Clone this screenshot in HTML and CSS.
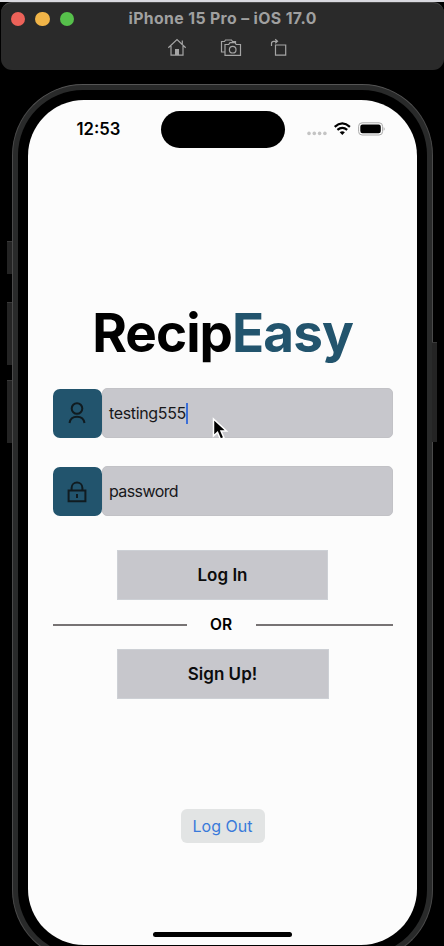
FILE: index.html
```html
<!DOCTYPE html>
<html lang="en">
<head>
<meta charset="utf-8">
<title>RecipEasy</title>
<link rel="stylesheet" href="styles.css">
</head>
<body>
<header class="toolbar">
  <div class="titlebar">
    <i class="light red"></i><i class="light yellow"></i><i class="light green"></i>
    <span class="window-title">iPhone 15 Pro – iOS 17.0</span>
  </div>
  <div class="tools">
    <svg width="20" height="20" viewBox="0 0 20 20"><path d="M1.3 9.700 10 1.600l8.700 8.100M4 8v9.200h12V8M15.300 6V2.600"/><path class="solid" d="M8 17v-6h4v6z"/></svg>
    <svg class="camera" width="22" height="20" viewBox="0 0 22 20"><path d="M4.500 14H1.500V3.500h3l1-1.500h6l1 1.500h3V5M5 6.500h3.700L10 4.600h5l1.200 1.900h4.300v10.800H5z"/><circle cx="12.700" cy="11.700" r="3.300"/></svg>
    <svg width="18" height="20" viewBox="0 0 18 20"><path d="M5.500 7h10.200v10.200H5.500zM1.500 8V5.500q0-2.200 2.200-2.200H7M5.200 1.300l2.300 2-2.300 2"/></svg>
  </div>
</header>
<div class="phone">
  <i class="key action"></i><i class="key volume-up"></i><i class="key volume-down"></i><i class="key power"></i>
  <div class="bezel">
    <main class="screen">
      <div class="status">
        <span class="time">12:53</span>
        <span class="island"></span>
        <span class="indicators">
          <svg width="78" height="16" viewBox="0 0 78 16">
            <g fill="#c4c4c4"><circle cx="2" cy="12.400" r="1.800"/><circle cx="7.300" cy="12.400" r="1.800"/><circle cx="12.600" cy="12.400" r="1.800"/><circle cx="17.900" cy="12.400" r="1.800"/></g>
            <g fill="none" stroke="#000" stroke-width="2.200"><path d="M27.700 5.800q7.600-6.700 15.200 0M30.400 8.900q4.900-4.200 9.800 0"/></g>
            <path d="M32.700 11.200q2.600-2.100 5.200 0l-2.600 2.700z"/>
            <rect x="51.600" y="1.800" width="24" height="12.200" rx="3.500" fill="none" stroke="#aaa"/>
            <rect x="53.300" y="3.500" width="20.500" height="8.800" rx="2.200"/><path d="M76.700 6q2 1.900 0 3.800z" fill="#aaa"/>
          </svg>
        </span>
      </div>
      <h1>Recip<span>Easy</span></h1>
      <div class="form">
        <div class="row">
          <span class="badge"><svg width="20" height="24" viewBox="0 0 20 24"><circle cx="10" cy="7.500" r="5.300"/><path d="M2.500 22c.7-4.200 3.600-6.200 7.500-6.200s6.800 2 7.500 6.200"/></svg></span>
          <span class="field"><span class="username">testing555</span><i class="caret"></i></span>
          <svg class="pointer" width="18" height="26" viewBox="0 0 18 26"><path d="M2.500 2v17l4-3.700 2.900 6.800 3.500-1.500-2.900-6.600h5.500z"/></svg>
        </div>
        <div class="row">
          <span class="badge"><svg class="lock" width="20" height="24" viewBox="0 0 20 24"><path d="M1.600 10.500h16.800v10.800H1.600zM4.600 10.500V8c0-7.200 10.800-7.200 10.800 0v2.500M10 14v4"/></svg></span>
          <span class="field"><span class="password">password</span></span>
        </div>
      </div>
      <div class="button login"><span>Log In</span></div>
      <div class="divider"><i></i><span>OR</span><i></i></div>
      <div class="button signup"><span>Sign Up!</span></div>
      <div class="logout"><span>Log Out</span></div>
      <i class="home-bar"></i>
    </main>
  </div>
</div>
</body>
</html>
```
FILE: styles.css
```css
* { box-sizing: border-box; }
body { margin: 0; height: 946px; overflow: hidden; background: #000; font-family: Inter, "Liberation Sans", sans-serif; border-top: 2px solid #d9d9df; }
svg { display: block; }
i { display: block; }
.toolbar { height: 68px; margin-left: 1px; background: #2a2a2a; border-top: 1px solid #4b4b4b; border-radius: 11px; }
.titlebar { height: 32px; display: flex; align-items: center; gap: 10px; padding-left: 9.500px; }
.light { width: 14.500px; height: 14.500px; border-radius: 50%; }
.red { background: #ec6259; }
.yellow { background: #f0b448; }
.green { background: #56c04b; }
.window-title { margin: -2px 0 0 44.500px; color: #a0a0a0; font-size: 15.800px; font-weight: 700; letter-spacing: 0.380px; white-space: nowrap; }
.tools { display: flex; padding: 3px 0 0 166px; }
.tools svg { fill: none; stroke: #a5a5a5; stroke-width: 1.200; }
.tools .solid { fill: #a5a5a5; stroke: none; }
.tools .camera { margin: 0 28.500px 0 32.500px; }
.phone { position: relative; width: 421px; height: 877px; margin: 14px 0 0 12px; padding: 5px; background: #292a2a; border: 1px solid #4a4a4a; border-top-color: #555; border-radius: 71px; }
.bezel { height: 865px; padding: 10px; background: #000; border-radius: 65px; }
.screen { position: relative; height: 845px; padding: 0 24.500px; background: #fcfcfc; border-radius: 56px; overflow: hidden; display: flex; flex-direction: column; align-items: center; }
.key { position: absolute; width: 5px; background: #242424; border-top: 1px solid #393939; }
.action { left: -6px; top: 156px; height: 33px; }
.volume-up { left: -6px; top: 217px; height: 63px; }
.volume-down { left: -6px; top: 295px; height: 63px; }
.power { right: -5px; top: 257px; height: 100px; }
.status { width: 100%; height: 58px; flex: none; display: flex; align-items: center; }
.time { width: 108px; padding-left: 24px; font-size: 16.700px; font-weight: 600; }
.island { width: 124px; height: 37px; border-radius: 19px; background: #000; }
.indicators { margin-left: 22px; }
h1 { margin: 144px 0 0; height: 62px; line-height: 62px; font-size: 53px; font-weight: 700; letter-spacing: -0.950px; color: #000; white-space: nowrap; }
h1 span { color: #22546d; }
.form { width: 340px; margin-top: 24px; display: grid; gap: 28px; }
.row { position: relative; height: 50px; display: flex; }
.badge { width: 49px; height: 49px; margin-top: .5px; border-radius: 7px; background: #22546d; display: grid; place-items: center; }
.badge svg { fill: none; stroke: #101b20; stroke-width: 2; }
.badge .lock { margin-top: 2px; }
.field { flex: 1; display: flex; align-items: center; padding-left: 6.500px; background: #c7c7cc; border: 1px solid #c2c2c6; border-radius: 5px; font-size: 16px; color: #17171a; }
.username { letter-spacing: -0.350px; }
.password { letter-spacing: -0.600px; }
.caret { width: 2px; height: 21px; background: #3c6fd8; }
.pointer { position: absolute; left: 158px; top: 29px; stroke: #fff; stroke-width: 1.500; }
.button { height: 50px; display: grid; place-items: center; background: #c7c7cc; border: 1px solid #cdd0d5; font-size: 17px; font-weight: 600; color: #0c0c0c; }
.login { width: 211px; margin-top: 34px; }
.divider { width: 340px; height: 49px; display: flex; align-items: center; font-size: 15.500px; font-weight: 600; }
.divider i { width: 134px; height: 2px; background: #777374; }
.divider i:last-child { width: 137px; }
.divider span { flex: 1; text-align: center; }
.signup { width: 212px; }
.logout { width: 84px; height: 34px; margin-top: 110px; border-radius: 6px; background: #e2e4e4; color: #397ada; font-size: 16px; display: grid; place-items: center; }
.home-bar { width: 139px; height: 5px; margin-top: 89px; border-radius: 3px; background: #000; }
```
